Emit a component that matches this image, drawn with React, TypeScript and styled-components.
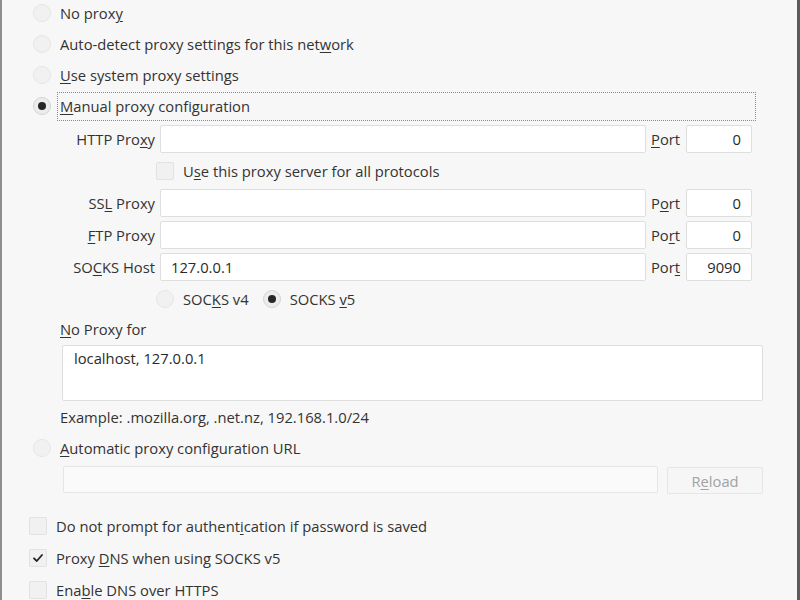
import React from 'react';
import styled, { createGlobalStyle } from 'styled-components';

const Global = createGlobalStyle`
  html, body { margin: 0; padding: 0; background: #f7f7f7; }
  body {
    font-family: "Open Sans", "Noto Sans", sans-serif;
    font-size: 14.75px;
    color: #333333;
  }
`;

const Window = styled.div`
  width: 800px;
  height: 600px;
  box-sizing: border-box;
  overflow: hidden;
  border-left: 2px solid #8e8e8e;
  border-right: 3px solid #5c5c5c;
  background: #f7f7f7;
  display: flex;
  flex-direction: column;
`;

const Text = styled.span`
  white-space: nowrap;
`;

const U = styled.span`
  text-decoration: underline;
  text-underline-offset: 2px;
  text-decoration-thickness: 1px;
`;

const RadioList = styled.div<{ $top?: number }>`
  display: flex;
  flex-direction: column;
  gap: 5px;
  padding-left: 31px;
  margin-top: ${p => p.$top ?? 0}px;
`;

const RadioRow = styled.div`
  height: 26px;
  display: flex;
  align-items: center;
  gap: 9px;
`;

const RadioCircle = styled.span<{ $on?: boolean }>`
  width: 18px;
  height: 18px;
  flex: none;
  box-sizing: border-box;
  border-radius: 50%;
  border: 1px solid ${p => (p.$on ? '#d4d4d4' : '#e6e6e6')};
  background: ${p => (p.$on ? '#ececec' : '#f1f1f1')};
  display: flex;
  align-items: center;
  justify-content: center;
  &::after {
    content: '';
    display: ${p => (p.$on ? 'block' : 'none')};
    width: 8px;
    height: 8px;
    border-radius: 50%;
    background: #262626;
  }
`;

const Focus = styled.span`
  flex: none;
  width: 699px;
  height: 29px;
  box-sizing: border-box;
  margin-left: -3px;
  padding-left: 2px;
  border: 1px dotted #8a8a8a;
  display: flex;
  align-items: center;
`;

const ProxyGrid = styled.div`
  display: grid;
  grid-template-columns: 95px 486px 30px 66px;
  grid-auto-rows: 28px;
  column-gap: 5px;
  row-gap: 4px;
  align-items: center;
  margin: 6px 0 0 58px;
`;

const FieldLabel = styled.span`
  justify-self: end;
  white-space: nowrap;
`;

const PortLabel = styled.span`
  white-space: nowrap;
`;

const TextInput = styled.input<{ $right?: boolean }>`
  box-sizing: border-box;
  width: 100%;
  height: 28px;
  margin: 0;
  border: 1px solid #dedede;
  border-radius: 2px;
  background: #ffffff;
  font: inherit;
  color: #2a2a2a;
  padding: 0 10px;
  text-align: ${p => (p.$right ? 'right' : 'left')};
  outline: none;
`;

const SpanRow = styled.div`
  grid-column: 2 / -1;
  display: flex;
  align-items: center;
  margin-left: -4px;
`;

const OptionPair = styled.span`
  display: flex;
  align-items: center;
  gap: 9px;
  margin-right: 14px;
`;

const CheckBox = styled.span`
  width: 18px;
  height: 18px;
  flex: none;
  box-sizing: border-box;
  border: 1px solid #e2e2e2;
  border-radius: 2px;
  background: #f1f1f1;
  display: flex;
  align-items: center;
  justify-content: center;
`;

const Block = styled.div`
  display: flex;
  flex-direction: column;
  margin-left: 58px;
`;

const PlainLine = styled.div<{ $top: number }>`
  height: 20px;
  line-height: 20px;
  margin-top: ${p => p.$top}px;
  white-space: nowrap;
`;

const TextArea = styled.textarea`
  box-sizing: border-box;
  width: 701px;
  height: 56px;
  margin: 6px 0 0 2px;
  padding: 2px 11px;
  border: 1px solid #dedede;
  border-radius: 2px;
  background: #ffffff;
  font: inherit;
  line-height: 20px;
  color: #2a2a2a;
  resize: none;
  outline: none;
  display: block;
`;

const AutoRow = styled.div`
  display: flex;
  align-items: center;
  gap: 9px;
  height: 27px;
  margin: 5px 0 0 61px;
`;

const UrlInput = styled.input`
  box-sizing: border-box;
  width: 595px;
  height: 27px;
  margin: 0;
  border: 1px solid #e6e6e6;
  border-radius: 2px;
  background: #fafafa;
  font: inherit;
  outline: none;
`;

const Button = styled.button`
  box-sizing: border-box;
  width: 96px;
  height: 27px;
  margin: 2px 0 0 0;
  border: 1px solid #e6e6e6;
  border-radius: 2px;
  background: #f6f6f6;
  font: inherit;
  color: #a2a2a2;
  padding: 0;
`;

const CheckList = styled.div`
  display: flex;
  flex-direction: column;
  gap: 6px;
  margin-top: 20px;
  padding-left: 27px;
`;

const CheckRow = styled.div`
  height: 26px;
  display: flex;
  align-items: center;
  gap: 9px;
`;

const Tick = () => (
  <svg width="12" height="12" viewBox="0 0 12 12">
    <path d="M2 6.3 L4.8 9 L10 3" fill="none" stroke="#222" strokeWidth="1.8" strokeLinecap="round" strokeLinejoin="round" />
  </svg>
);

export default function App() {
  return (
    <>
      <Global />
      <Window>
        <RadioList>
          <RadioRow><RadioCircle /><Text>No prox<U>y</U></Text></RadioRow>
          <RadioRow><RadioCircle /><Text>Auto-detect proxy settings for this net<U>w</U>ork</Text></RadioRow>
          <RadioRow><RadioCircle /><Text><U>U</U>se system proxy settings</Text></RadioRow>
          <RadioRow>
            <RadioCircle $on />
            <Focus><Text><U>M</U>anual proxy configuration</Text></Focus>
          </RadioRow>
        </RadioList>

        <ProxyGrid>
          <FieldLabel>HTTP Pro<U>x</U>y</FieldLabel>
          <TextInput readOnly value="" />
          <PortLabel><U>P</U>ort</PortLabel>
          <TextInput readOnly $right value="0" />

          <SpanRow>
            <OptionPair><CheckBox /><Text>U<U>s</U>e this proxy server for all protocols</Text></OptionPair>
          </SpanRow>

          <FieldLabel>SS<U>L</U> Proxy</FieldLabel>
          <TextInput readOnly value="" />
          <PortLabel>P<U>o</U>rt</PortLabel>
          <TextInput readOnly $right value="0" />

          <FieldLabel><U>F</U>TP Proxy</FieldLabel>
          <TextInput readOnly value="" />
          <PortLabel>Po<U>r</U>t</PortLabel>
          <TextInput readOnly $right value="0" />

          <FieldLabel>SO<U>C</U>KS Host</FieldLabel>
          <TextInput readOnly value="127.0.0.1" />
          <PortLabel>Por<U>t</U></PortLabel>
          <TextInput readOnly $right value="9090" />

          <SpanRow>
            <OptionPair><RadioCircle /><Text>SOC<U>K</U>S v4</Text></OptionPair>
            <OptionPair><RadioCircle $on /><Text>SOCKS <U>v</U>5</Text></OptionPair>
          </SpanRow>
        </ProxyGrid>

        <Block>
          <PlainLine $top={6}><U>N</U>o Proxy for</PlainLine>
          <TextArea readOnly value="localhost, 127.0.0.1" />
          <PlainLine $top={6}>Example: .mozilla.org, .net.nz, 192.168.1.0/24</PlainLine>
        </Block>

        <RadioList $top={8}>
          <RadioRow><RadioCircle /><Text><U>A</U>utomatic proxy configuration URL</Text></RadioRow>
        </RadioList>

        <AutoRow>
          <UrlInput readOnly value="" />
          <Button type="button">R<U>e</U>load</Button>
        </AutoRow>

        <CheckList>
          <CheckRow><CheckBox /><Text>Do not prompt for authent<U>i</U>cation if password is saved</Text></CheckRow>
          <CheckRow><CheckBox><Tick /></CheckBox><Text>Proxy <U>D</U>NS when using SOCKS v5</Text></CheckRow>
          <CheckRow><CheckBox /><Text>Ena<U>b</U>le DNS over HTTPS</Text></CheckRow>
        </CheckList>
      </Window>
    </>
  );
}
